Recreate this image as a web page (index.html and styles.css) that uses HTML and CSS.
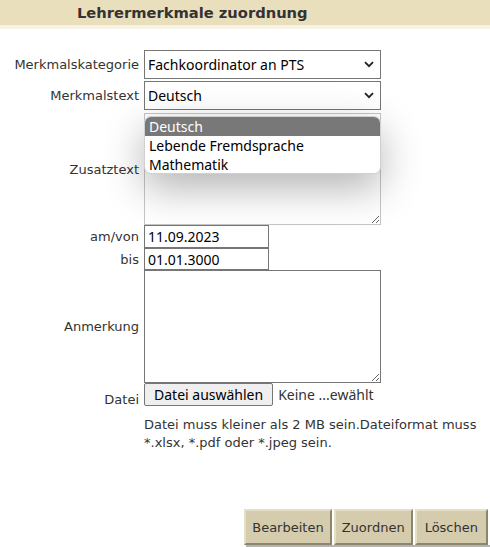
FILE: index.html
```html
<!DOCTYPE html>
<html>
<head>
    <title>Lehrermerkmale zuordnung</title>
    <link rel="stylesheet" href="styles.css">
</head>
<body>
    <div class="header">
        <h1>Lehrermerkmale zuordnung</h1>
    </div>

    <div class="form">
        <div class="row row-select">
            <label>Merkmalskategorie</label>
            <div class="select-wrap">
                <select class="field-wide">
                    <option>Fachkoordinator an PTS</option>
                </select>
                <svg class="chevron" width="10" height="7" viewBox="0 0 10 7">
                    <path d="M1 1.2 L5 5.2 L9 1.2" fill="none" stroke="#222" stroke-width="1.8"/>
                </svg>
            </div>
        </div>
        <div class="row row-select2">
            <label>Merkmalstext</label>
            <div class="select-wrap">
                <select class="field-wide">
                    <option>Deutsch</option>
                </select>
                <svg class="chevron" width="10" height="7" viewBox="0 0 10 7">
                    <path d="M1 1.2 L5 5.2 L9 1.2" fill="none" stroke="#222" stroke-width="1.8"/>
                </svg>
            </div>
        </div>
        <div class="row">
            <label>Zusatztext</label>
            <div class="popup-anchor">
                <textarea class="field-wide area area-muted"></textarea>
                <ul class="popup">
                    <li class="active">Deutsch</li>
                    <li>Lebende Fremdsprache</li>
                    <li>Mathematik</li>
                </ul>
            </div>
        </div>
        <div class="row">
            <label>am/von</label>
            <input type="text" class="date" value="11.09.2023">
        </div>
        <div class="row">
            <label>bis</label>
            <input type="text" class="date date-last" value="01.01.3000">
        </div>
        <div class="row">
            <label>Anmerkung</label>
            <textarea class="field-wide area"></textarea>
        </div>
        <div class="row row-file">
            <label>Datei</label>
            <div class="file">
                <button class="file-btn">Datei auswählen</button>
                <span class="file-name">Keine ...ewählt</span>
            </div>
        </div>
        <div class="hint">
            Datei muss kleiner als 2 MB sein.Dateiformat muss *.xlsx, *.pdf oder *.jpeg sein.
        </div>
    </div>

    <div class="actions">
        <button class="action">Bearbeiten</button>
        <button class="action">Zuordnen</button>
        <button class="action action-last">Löschen</button>
    </div>
</body>
</html>
```

FILE: styles.css
```css
body {
    margin: 0;
    font-family: "DejaVu Sans", Verdana, sans-serif;
    color: #333;
    background-color: #fff;
}

.header {
    height: 25px;
    background-color: #e9dfbd;
    border-bottom: 4px solid #f6f3e6;
}

.header h1 {
    margin: 0;
    padding-left: 77px;
    font-size: 14.7px;
    line-height: 25px;
    color: #333;
}

.form {
    margin-top: 21px;
}

.row {
    display: flex;
    align-items: center;
}

.row label {
    width: 139px;
    margin-right: 5px;
    text-align: right;
    font-size: 13px;
}

.row-select {
    margin-bottom: 2px;
}

.row-select2 {
    margin-bottom: 3px;
}

.field-wide {
    width: 237px;
    box-sizing: border-box;
}

select, input, textarea, .file-btn, .file-name {
    font-family: "Noto Sans", "Open Sans", sans-serif;
    font-size: 14px;
    color: #000;
}

.select-wrap {
    position: relative;
}

select {
    display: block;
    height: 29px;
    margin: 0;
    padding: 0 3px;
    border: 1px solid #767676;
    border-radius: 0;
    background-color: #fff;
    appearance: none;
    -webkit-appearance: none;
}

.chevron {
    position: absolute;
    right: 7px;
    top: 11px;
    pointer-events: none;
}

.area {
    display: block;
    height: 113px;
    margin: 0;
    border: 1px solid #767676;
    resize: vertical;
}

.area-muted {
    height: 112px;
    border-color: #c6c6c6;
}

.popup-anchor {
    position: relative;
}

.popup {
    position: absolute;
    top: 3px;
    left: 0;
    width: 237px;
    height: 58px;
    margin: 0;
    padding: 0;
    list-style: none;
    box-sizing: border-box;
    background-color: #fff;
    border: 1px solid #d0d0d0;
    border-radius: 7px;
    overflow: hidden;
    box-shadow: 0 14px 40px rgba(0, 0, 0, 0.3);
    font-family: "Noto Sans", "Open Sans", sans-serif;
    font-size: 14px;
    color: #000;
}

.popup li {
    height: 19px;
    line-height: 19px;
    padding-left: 4px;
}

.popup li.active {
    background-color: #787878;
    color: #fff;
}

.date {
    display: block;
    width: 125px;
    height: 23px;
    box-sizing: border-box;
    margin: 0;
    padding: 0 3px;
    border: 1px solid #767676;
}

.date-last {
    height: 22px;
}

.row-file {
    align-items: flex-end;
}

.row-file label {
    position: relative;
    top: 1px;
}

.file {
    display: flex;
    align-items: center;
}

.file-btn {
    height: 23px;
    padding: 0 9px;
    margin: 0;
    border: 1px solid #767676;
    border-radius: 2px;
    background-color: #efefef;
}

.file-name {
    margin-left: 5px;
    color: #333;
}

.hint {
    margin: 10px 0 0 144px;
    font-size: 13px;
    line-height: 18px;
    width: 340px;
}

.actions {
    display: flex;
    justify-content: flex-end;
    gap: 2px;
    margin: 57px 0 0 246px;
    padding-right: 2px;
    border-bottom: 2px solid #b4b4b4;
}

.action {
    height: 36px;
    padding: 0 6px;
    margin: 0;
    font-family: "DejaVu Sans", Verdana, sans-serif;
    font-size: 13px;
    color: #333;
    background-color: #d5ccad;
    border: 2px solid;
    border-color: #e6dfc8 #8c856e #8c856e #e6dfc8;
    cursor: pointer;
}

.action-last {
    padding: 0 8px;
}
```
